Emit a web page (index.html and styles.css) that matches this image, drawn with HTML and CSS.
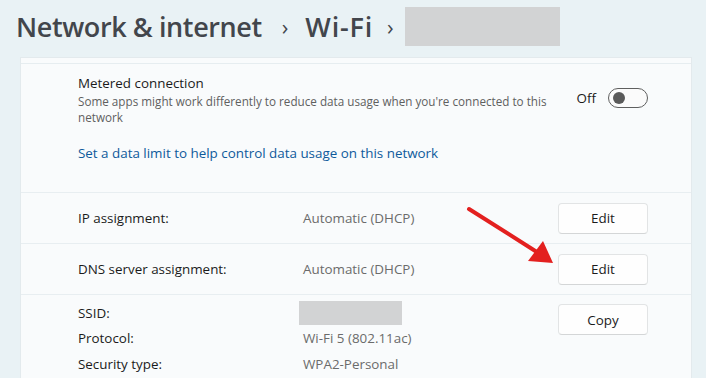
FILE: index.html
```html
<!DOCTYPE html>
<html lang="en">
<head>
<meta charset="utf-8">
<title>Wi-Fi properties</title>
<link rel="stylesheet" href="styles.css">
</head>
<body>
<header class="crumbs">
  <span class="crumb">Network &amp; internet</span>
  <span class="chev">›</span>
  <span class="crumb crumb-wifi">Wi-Fi</span>
  <span class="chev chev-last">›</span>
  <span class="redact redact-title"></span>
</header>

<main class="card">
  <div class="prev"></div>

  <section class="metered">
    <div class="metered-top">
      <div class="metered-text">
        <div class="item-title">Metered connection</div>
        <div class="item-desc">Some apps might work differently to reduce data usage when you're connected to this network</div>
      </div>
      <div class="toggle-wrap">
        <span class="toggle-label">Off</span>
        <span class="toggle"><span class="knob"></span></span>
      </div>
    </div>
    <a class="link" href="#">Set a data limit to help control data usage on this network</a>
  </section>

  <section class="row">
    <span class="label">IP assignment:</span>
    <span class="value">Automatic (DHCP)</span>
    <button class="btn">Edit</button>
  </section>

  <section class="row">
    <span class="label">DNS server assignment:</span>
    <span class="value">Automatic (DHCP)</span>
    <button class="btn">Edit</button>
  </section>

  <section class="props">
    <div class="props-grid">
      <span class="label">SSID:</span>
      <span class="value"><span class="redact redact-ssid"></span></span>
      <span class="label">Protocol:</span>
      <span class="value">Wi-Fi 5 (802.11ac)</span>
      <span class="label">Security type:</span>
      <span class="value">WPA2-Personal</span>
    </div>
    <button class="btn btn-copy">Copy</button>
  </section>
</main>

<svg class="arrow" width="706" height="378" viewBox="0 0 706 378" aria-hidden="true">
  <line x1="469" y1="209" x2="540" y2="254" stroke="#e3201f" stroke-width="4" stroke-linecap="round"/>
  <polygon points="553,263 528,261 543,241" fill="#e3201f"/>
</svg>
</body>
</html>
```

FILE: styles.css
```css
html, body {
  margin: 0;
  padding: 0;
}

body {
  width: 706px;
  height: 378px;
  overflow: hidden;
  background: #e9f2f5;
  font-family: "Open Sans", "Noto Sans", sans-serif;
  color: #1b1b1b;
  position: relative;
}

.crumbs {
  height: 53px;
  display: flex;
  align-items: center;
  padding-left: 16px;
  color: #42464c;
}

.crumb {
  font-size: 27px;
  font-weight: 600;
  letter-spacing: -0.4px;
}

.crumb-wifi {
  letter-spacing: 0.8px;
  margin-left: 2px;
}

.chev {
  font-size: 22px;
  margin: 0 15px 0 20px;
  padding-bottom: 2px;
}

.chev-last {
  margin: 0 14px 0 14px;
}

.redact {
  display: inline-block;
  background: #d2d3d4;
}

.redact-title {
  width: 155px;
  height: 39px;
  margin-left: -3px;
}

.card {
  margin: 4px 14px 0 20px;
  background: #f9fbfc;
  border: 1px solid #e3eaed;
  border-bottom: none;
  height: 330px;
}

.prev {
  height: 5px;
  border-bottom: 1px solid #e6edf0;
}

.metered {
  padding: 9px 43px 29px 57px;
  border-bottom: 1px solid #e8eef1;
}

.metered-top {
  display: flex;
  align-items: center;
}

.metered-text {
  flex: 1;
}

.item-title {
  font-size: 13.4px;
  line-height: 20px;
  color: #1b1b1b;
}

.item-desc {
  font-size: 11.7px;
  line-height: 16px;
  color: #5f5f5f;
  max-width: 480px;
}

.toggle-wrap {
  display: flex;
  align-items: center;
  gap: 12px;
  margin-top: -3px;
}

.toggle-label {
  font-size: 13.4px;
}

.toggle {
  width: 38px;
  height: 18px;
  border: 1px solid #5f5f5f;
  border-radius: 10px;
  background: #fbfbfb;
  display: flex;
  align-items: center;
}

.knob {
  width: 12px;
  height: 12px;
  border-radius: 50%;
  background: #5a5a5a;
  margin-left: 4px;
}

.link {
  display: block;
  margin-top: 18px;
  font-size: 13.4px;
  line-height: 20px;
  color: #0e5a9b;
  text-decoration: none;
}

.row {
  height: 50px;
  display: flex;
  align-items: center;
  padding: 0 43px 0 57px;
  border-bottom: 1px solid #e8eef1;
}

.label {
  width: 225px;
  font-size: 13.4px;
  color: #1b1b1b;
}

.value {
  flex: 1;
  font-size: 13.4px;
  color: #6b6b6b;
}

.btn {
  width: 90px;
  height: 31px;
  background: #fefefe;
  border: 1px solid #e2e4e5;
  border-bottom-color: #d4d6d7;
  border-radius: 4px;
  font-family: inherit;
  font-size: 13.4px;
  color: #1b1b1b;
  padding: 0;
}

.props {
  display: flex;
  align-items: flex-start;
  padding: 5px 43px 0 57px;
}

.props-grid {
  flex: 1;
  display: grid;
  grid-template-columns: 225px 1fr;
  grid-auto-rows: 25.5px;
  align-items: center;
}

.props-grid .label,
.props-grid .value {
  width: auto;
}

.redact-ssid {
  width: 103px;
  height: 24px;
  margin-left: -4px;
  vertical-align: middle;
}

.btn-copy {
  margin-top: 4px;
}

.arrow {
  position: absolute;
  left: 0;
  top: 0;
  pointer-events: none;
}
```
